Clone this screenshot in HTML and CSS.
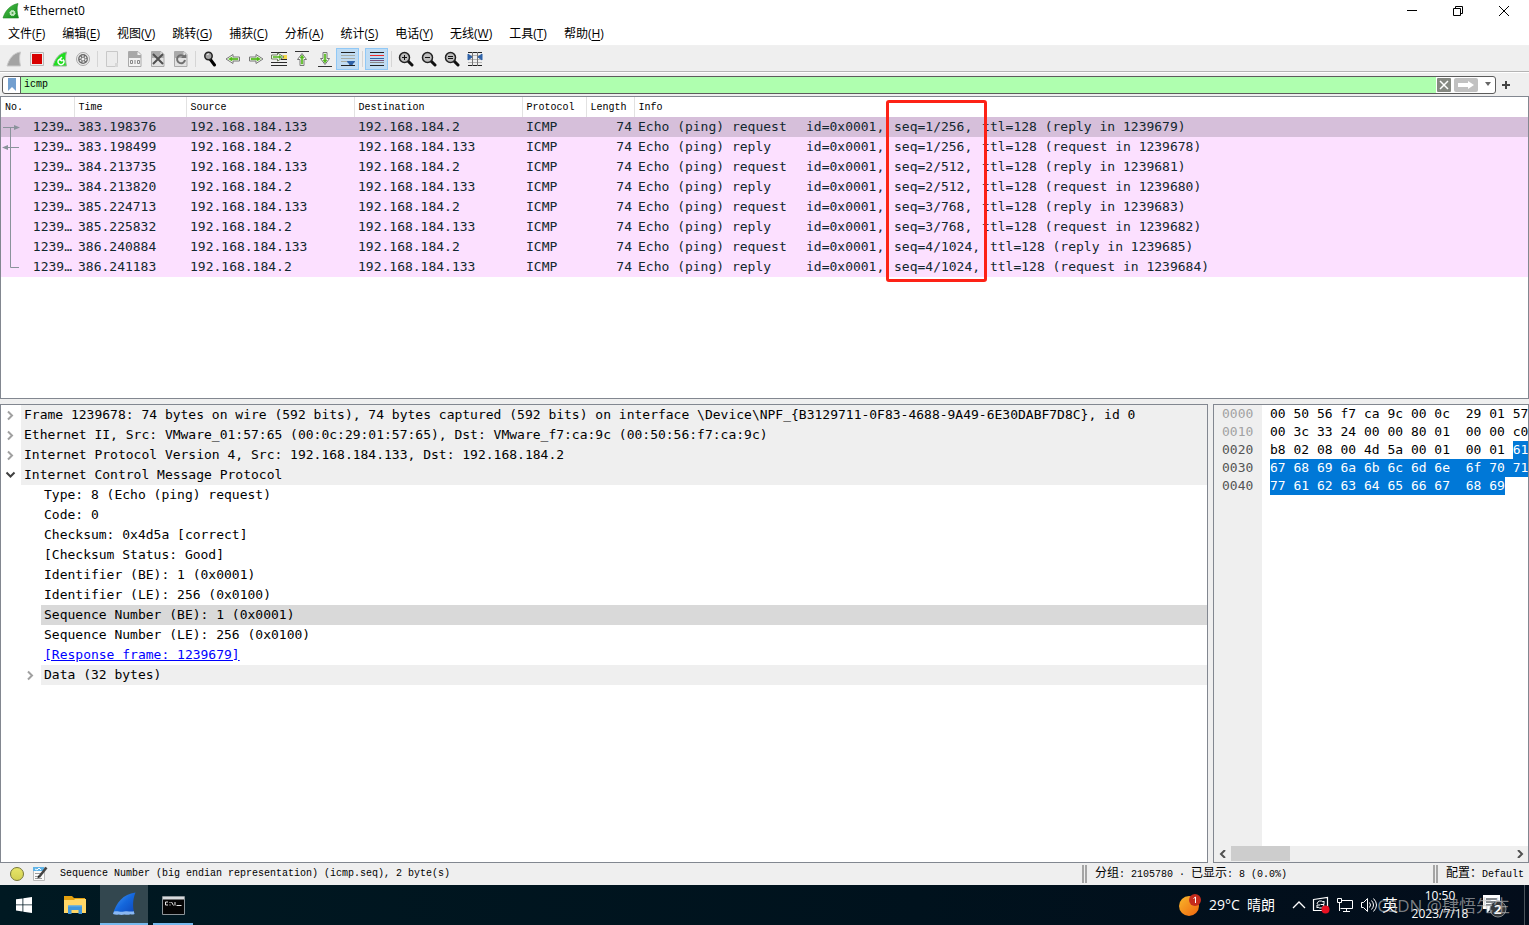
FILE: index.html
```html
<!DOCTYPE html>
<html lang="zh-CN">
<head>
<meta charset="utf-8">
<title>*Ethernet0</title>
<link rel="stylesheet" href="styles.css">
</head>
<body>
<svg width="0" height="0" class="defs" aria-hidden="true">
  <defs>
    <linearGradient id="finGreen" x1="0" y1="0" x2="1" y2="1"><stop offset="0" stop-color="#4fc24a"/><stop offset="1" stop-color="#138a1c"/></linearGradient>
    <linearGradient id="finBlue" x1="0" y1="0" x2="1" y2="1"><stop offset="0" stop-color="#4a9cf5"/><stop offset=".5" stop-color="#1467dc"/><stop offset="1" stop-color="#0d45b8"/></linearGradient>
    <linearGradient id="sun" x1="0" y1="0" x2="1" y2="1"><stop offset="0" stop-color="#f8b82c"/><stop offset="1" stop-color="#f0650e"/></linearGradient>
    <linearGradient id="led" x1="0" y1="0" x2="0" y2="1"><stop offset="0" stop-color="#e8e66a"/><stop offset="1" stop-color="#d2d052"/></linearGradient>
    <symbol id="lens" viewBox="0 0 16 16"><path d="M9 9l5 5" stroke="#111" stroke-width="3" stroke-linecap="round"/><circle cx="6.500" cy="6.500" r="5" fill="#bdbdbd" stroke="#222" stroke-width="1.500"/></symbol>
    <symbol id="arrow" viewBox="0 0 16 16"><path d="M1.500 6h6.500V3.500l7 4.500-7 4.500V10H1.500z" fill="#fff" stroke="#777"/><path d="M3 7.300h6V6l3.500 2L9 10V8.700H3z" fill="#54b81c" stroke="#54b81c" stroke-width=".6"/></symbol>
  </defs>
</svg>
<div class="window">
  <header class="titlebar">
    <svg class="app-icon" width="18" height="16" viewBox="0 0 18 16"><path d="M1 15C3 8 8 2 16 0.500 14.500 5 15 10 16.500 15z" fill="url(#finGreen)" stroke="#1c8a22" stroke-width=".6"/><circle cx="10.500" cy="10" r="2.600" fill="#bce8bb" stroke="#e4f7e3" stroke-dasharray="1.200 .8"/><circle cx="10.500" cy="10" r="1" fill="#4c9f4a"/></svg>
    <h1 class="title">*Ethernet0</h1>
    <div class="caption">
      <button aria-label="Minimize"><svg width="12" height="12" viewBox="0 0 12 12"><path d="M1 5.500h10" stroke="#000"/></svg></button>
      <button aria-label="Restore"><svg width="12" height="12" viewBox="0 0 12 12"><path d="M1.500 3.500h7v7h-7zM3.500 3.500v-2h7v7h-2" fill="none" stroke="#000"/></svg></button>
      <button aria-label="Close"><svg width="12" height="12" viewBox="0 0 12 12"><path d="M1 1l10 10M11 1L1 11" stroke="#000"/></svg></button>
    </div>
  </header>
  <nav class="menu">
    <button>文件(<u>F</u>)</button><button>编辑(<u>E</u>)</button><button>视图(<u>V</u>)</button><button>跳转(<u>G</u>)</button><button>捕获(<u>C</u>)</button><button>分析(<u>A</u>)</button><button>统计(<u>S</u>)</button><button>电话(<u>Y</u>)</button><button>无线(<u>W</u>)</button><button>工具(<u>T</u>)</button><button>帮助(<u>H</u>)</button>
  </nav>
  <div class="toolbar" role="toolbar">
    <button aria-label="Start capture"><svg width="16" height="16" viewBox="0 0 16 16"><path d="M1 15C3 8 7 2 14.500 1 13 6 13.500 10 14.500 15z" fill="#a3a3a3" stroke="#c9c9c9"/></svg></button>
    <button aria-label="Stop capture"><svg width="16" height="16" viewBox="0 0 16 16"><path d="M1.500 1.500h13v13h-13z" fill="#eee" stroke="#b9b9b9"/><path d="M3 3h10v10H3z" fill="#d80000"/></svg></button>
    <button aria-label="Restart capture"><svg width="16" height="16" viewBox="0 0 16 16"><path d="M1 15C3 8 7 2 14.500 1 13 6 13.500 10 14.500 15z" fill="#1fe01f" stroke="#9bb59b"/><path d="M7 8.500a3 3 0 1 0 4 0M10 6l-2.500 2.500L10.500 10" fill="none" stroke="#fff" stroke-width="1.500"/></svg></button>
    <button aria-label="Capture options"><svg width="16" height="16" viewBox="0 0 16 16"><circle cx="8" cy="8" r="6.500" fill="#eee" stroke="#a9a9a9"/><circle cx="8" cy="8" r="4.900" fill="#6a6a6a"/><circle cx="8" cy="8" r="3" fill="none" stroke="#eee" stroke-width="1.300" stroke-dasharray="2 1.140"/><circle cx="8" cy="8" r="1.600" fill="#eee"/></svg></button>
    <span class="sep"></span>
    <button aria-label="Open"><svg width="16" height="16" viewBox="0 0 16 16"><path d="M2.500.5h11v15h-11z" fill="#ececec" stroke="#c8c8c8"/><path d="M11 12h3v4h-3z" fill="#d7d7d7"/></svg></button>
    <button aria-label="Save"><svg width="16" height="16" viewBox="0 0 16 16"><path d="M1.500.5h9.500l3 3v12H1.500z" fill="#f2f2f2" stroke="#aaa"/><path d="M2 1h8.500v3H14v3H2z" fill="#a8a8a8"/><path d="M3.500 9.500h2v3h-2zM10.500 9.500h2v3h-2zM8 9v4" fill="none" stroke="#888"/></svg></button>
    <button aria-label="Close file"><svg width="16" height="16" viewBox="0 0 16 16"><path d="M1.500.5h9.500l3 3v12H1.500z" fill="#e2e2e2" stroke="#aaa"/><path d="M2 1h8.500v3H14v3H2z" fill="#aaa"/><path d="M3 3l10 10M13 3L3 13" stroke="#505050" stroke-width="2"/></svg></button>
    <button aria-label="Reload"><svg width="16" height="16" viewBox="0 0 16 16"><path d="M1.500.5h9.500l3 3v12H1.500z" fill="#e2e2e2" stroke="#aaa"/><path d="M2 1h8.500v3H14v3H2z" fill="#aaa"/><path d="M11 5.500A4 4 0 1 0 12 9" fill="none" stroke="#707070" stroke-width="2"/><path d="M8 7h5V3z" fill="#707070"/></svg></button>
    <span class="sep"></span>
    <button aria-label="Find"><svg width="16" height="16" viewBox="0 0 16 16"><path d="M8 8l4.500 6" stroke="#000" stroke-width="3" stroke-linecap="round"/><circle cx="6.500" cy="5" r="3.700" fill="#a5a5a5" stroke="#222" stroke-width="1.500"/><path d="M5 4a2 2 0 0 1 2-1" stroke="#eee" fill="none"/></svg></button>
    <button aria-label="Back"><svg width="16" height="16" class="left"><use href="#arrow"/></svg></button>
    <button aria-label="Forward"><svg width="16" height="16"><use href="#arrow"/></svg></button>
    <button aria-label="Go to packet"><svg width="16" height="16" viewBox="0 0 16 16"><path d="M0 1.500h16M0 11.500h16M0 14.500h16M10 8.500h6" stroke="#2b2b2b"/><path d="M12 4h4v4h-4z" fill="#f4d84a"/><path d="M.5 4h6V2l6.500 4-6.500 4V8h-6z" fill="#fff" stroke="#6c7c5c"/><path d="M2 5.500h6v-1L11 6 8 7.500v-1H2z" fill="#54b81c" stroke="#54b81c" stroke-width=".6"/></svg></button>
    <button aria-label="First packet"><svg width="16" height="16" viewBox="0 0 16 16"><path d="M1 .5h14" stroke="#333"/><path d="M6 14.500v-6H3.500L8 2.500l4.500 6H10v6z" fill="#fff" stroke="#777"/><path d="M7.300 13V7H6l2-3 2 3H8.700v6z" fill="#54b81c" stroke="#54b81c" stroke-width=".6"/></svg></button>
    <button aria-label="Last packet"><svg width="16" height="16" viewBox="0 0 16 16"><path d="M1 15.500h14" stroke="#333"/><path d="M6 1.500v6H3.500l4.500 6 4.500-6H10v-6z" fill="#fff" stroke="#777"/><path d="M7.300 3v6H6l2 3 2-3H8.700V3z" fill="#54b81c" stroke="#54b81c" stroke-width=".6"/></svg></button>
    <button class="on" aria-label="Auto scroll"><svg width="16" height="16" viewBox="0 0 16 16"><path d="M1 1.500h14M1 14.500h14" stroke="#222"/><path d="M1 4.500h14M1 7.500h14M1 10.500h14" stroke="#a8aca4"/><path d="M7 10h8c0 2-2 2-2.500 4h-3C9 12 7 12 7 10z" fill="#2f62a8"/></svg></button>
    <span class="sep"></span>
    <button class="on" aria-label="Colorize"><svg width="16" height="16" viewBox="0 0 16 16"><path d="M1 1.500h14M1 14.500h14" stroke="#222"/><path d="M1 4.500h14" stroke="#ef2929"/><path d="M1 7.500h14" stroke="#3465a4"/><path d="M1 9.500h14" stroke="#75507b"/><path d="M1 11.500h14" stroke="#888"/></svg></button>
    <span class="sep"></span>
    <button aria-label="Zoom in"><svg width="16" height="16" viewBox="0 0 16 16"><use href="#lens"/><path d="M4 6.500h5M6.500 4v5" stroke="#111"/></svg></button>
    <button aria-label="Zoom out"><svg width="16" height="16" viewBox="0 0 16 16"><use href="#lens"/><path d="M4 6.500h5" stroke="#111"/></svg></button>
    <button aria-label="Normal size"><svg width="16" height="16" viewBox="0 0 16 16"><use href="#lens"/><path d="M4 5.500h5M4 7.500h5" stroke="#111"/></svg></button>
    <button aria-label="Resize columns"><svg width="16" height="16" viewBox="0 0 16 16"><path d="M1 1.500h14M1 14.500h14" stroke="#222"/><path d="M1 4.500h14M1 8.500h14M1 11.500h14" stroke="#b5b5b5"/><path d="M5.500 1v14M10.500 1v14" stroke="#777"/><path d="M1 3l4 3-4 3zM15 3l-4 3 4 3z" fill="#2f62a8" stroke="#2f62a8"/></svg></button>
  </div>
  <form class="filter">
    <div class="filter-box">
      <button type="button" class="mark" aria-label="Bookmarks"><svg width="10" height="14" viewBox="0 0 10 14"><path d="M1 0h8v13l-4-4-4 4z" fill="#729fcf"/></svg></button>
      <input type="text" value="icmp" aria-label="Display filter" spellcheck="false">
      <button type="button" aria-label="Clear"><svg width="14" height="14" viewBox="0 0 14 14"><rect width="14" height="14" rx="1" fill="#858881"/><path d="M3 3l8 8M11 3l-8 8" stroke="#fff" stroke-width="1.500"/></svg></button>
      <button type="button" aria-label="Apply"><svg width="24" height="14" viewBox="0 0 24 14"><rect width="24" height="14" rx="2" fill="#c1c1c1"/><path d="M4 5h10V3l6 4-6 4V9H4z" fill="#fff"/></svg></button>
      <button type="button" class="drop" aria-label="History"><svg width="8" height="5" viewBox="0 0 8 5"><path d="M1 0h6L4 4z" fill="#666"/></svg></button>
    </div>
    <button type="button" class="plus" aria-label="Add filter"><svg width="10" height="10" viewBox="0 0 10 10"><path d="M1 5h8M5 1v8" stroke="#444" stroke-width="2"/></svg></button>
  </form>

  <section class="packets">
    <table>
      <colgroup><col class="c-no"><col class="c-time"><col class="c-addr"><col class="c-addr"><col class="c-proto"><col class="c-len"><col></colgroup>
      <thead><tr><th>No.</th><th>Time</th><th>Source</th><th>Destination</th><th>Protocol</th><th>Length</th><th>Info</th></tr></thead>
      <tbody>
        <tr class="current"><td>1239…</td><td>383.198376</td><td>192.168.184.133</td><td>192.168.184.2</td><td>ICMP</td><td>74</td><td><span class="kind">Echo (ping) request</span><span class="id">id=0x0001,</span><span class="seq">seq=1/256, </span>ttl=128 (reply in 1239679)</td></tr>
        <tr><td>1239…</td><td>383.198499</td><td>192.168.184.2</td><td>192.168.184.133</td><td>ICMP</td><td>74</td><td><span class="kind">Echo (ping) reply</span><span class="id">id=0x0001,</span><span class="seq">seq=1/256, </span>ttl=128 (request in 1239678)</td></tr>
        <tr><td>1239…</td><td>384.213735</td><td>192.168.184.133</td><td>192.168.184.2</td><td>ICMP</td><td>74</td><td><span class="kind">Echo (ping) request</span><span class="id">id=0x0001,</span><span class="seq">seq=2/512, </span>ttl=128 (reply in 1239681)</td></tr>
        <tr><td>1239…</td><td>384.213820</td><td>192.168.184.2</td><td>192.168.184.133</td><td>ICMP</td><td>74</td><td><span class="kind">Echo (ping) reply</span><span class="id">id=0x0001,</span><span class="seq">seq=2/512, </span>ttl=128 (request in 1239680)</td></tr>
        <tr><td>1239…</td><td>385.224713</td><td>192.168.184.133</td><td>192.168.184.2</td><td>ICMP</td><td>74</td><td><span class="kind">Echo (ping) request</span><span class="id">id=0x0001,</span><span class="seq">seq=3/768, </span>ttl=128 (reply in 1239683)</td></tr>
        <tr><td>1239…</td><td>385.225832</td><td>192.168.184.2</td><td>192.168.184.133</td><td>ICMP</td><td>74</td><td><span class="kind">Echo (ping) reply</span><span class="id">id=0x0001,</span><span class="seq">seq=3/768, </span>ttl=128 (request in 1239682)</td></tr>
        <tr><td>1239…</td><td>386.240884</td><td>192.168.184.133</td><td>192.168.184.2</td><td>ICMP</td><td>74</td><td><span class="kind">Echo (ping) request</span><span class="id">id=0x0001,</span><span class="seq">seq=4/1024, </span>ttl=128 (reply in 1239685)</td></tr>
        <tr><td>1239…</td><td>386.241183</td><td>192.168.184.2</td><td>192.168.184.133</td><td>ICMP</td><td>74</td><td><span class="kind">Echo (ping) reply</span><span class="id">id=0x0001,</span><span class="seq">seq=4/1024, </span>ttl=128 (request in 1239684)</td></tr>
      </tbody>
    </table>
    <svg class="related" width="22" height="160" viewBox="0 0 22 160"><path d="M2 10.500h12M6 30.500h12M9.500 10v140.500H18" fill="none" stroke="#8a939b"/><path d="M13 8l6 2.500-6 2.500zM7 28l-6 2.500L7 33z" fill="#8a939b"/></svg>
    <div class="highlight"></div>
  </section>

  <main class="lower">
    <section class="details">
      <ul>
        <li class="node"><svg width="20" height="20" viewBox="0 0 20 20"><path d="M7 6.500l4 4-4 4" class="shut"/></svg><span>Frame 1239678: 74 bytes on wire (592 bits), 74 bytes captured (592 bits) on interface \Device\NPF_{B3129711-0F83-4688-9A49-6E30DABF7D8C}, id 0</span></li>
        <li class="node"><svg width="20" height="20" viewBox="0 0 20 20"><path d="M7 6.500l4 4-4 4" class="shut"/></svg><span>Ethernet II, Src: VMware_01:57:65 (00:0c:29:01:57:65), Dst: VMware_f7:ca:9c (00:50:56:f7:ca:9c)</span></li>
        <li class="node"><svg width="20" height="20" viewBox="0 0 20 20"><path d="M7 6.500l4 4-4 4" class="shut"/></svg><span>Internet Protocol Version 4, Src: 192.168.184.133, Dst: 192.168.184.2</span></li>
        <li class="node"><svg width="20" height="20" viewBox="0 0 20 20"><path d="M5.500 7.500l4 4 4-4" class="open"/></svg><span>Internet Control Message Protocol</span></li>
        <li class="leaf"><span>Type: 8 (Echo (ping) request)</span></li>
        <li class="leaf"><span>Code: 0</span></li>
        <li class="leaf"><span>Checksum: 0x4d5a [correct]</span></li>
        <li class="leaf"><span>[Checksum Status: Good]</span></li>
        <li class="leaf"><span>Identifier (BE): 1 (0x0001)</span></li>
        <li class="leaf"><span>Identifier (LE): 256 (0x0100)</span></li>
        <li class="leaf selected"><span>Sequence Number (BE): 1 (0x0001)</span></li>
        <li class="leaf"><span>Sequence Number (LE): 256 (0x0100)</span></li>
        <li class="leaf"><span><a href="#">[Response frame: 1239679]</a></span></li>
        <li class="node child"><svg width="20" height="20" viewBox="0 0 20 20"><path d="M7 6.500l4 4-4 4" class="shut"/></svg><span>Data (32 bytes)</span></li>
      </ul>
    </section>
    <section class="bytes">
      <div class="dump">
        <pre class="offsets"><span>0000</span>
<span>0010</span>
0020
0030
0040</pre>
        <pre class="hex">00 50 56 f7 ca 9c 00 0c  29 01 57 65 08 00 45 00
00 3c 33 24 00 00 80 01  00 00 c0 a8 b8 85 c0 a8
b8 02 08 00 4d 5a 00 01  00 01 <mark>61 62 63 64 65 66</mark>
<mark>67 68 69 6a 6b 6c 6d 6e  6f 70 71 72 73 74 75 76</mark>
<mark>77 61 62 63 64 65 66 67  68 69</mark></pre>
      </div>
      <div class="hscroll">
        <button aria-label="Scroll left"><svg width="8" height="8" viewBox="0 0 8 8"><path d="M6 0L2 4l4 4" fill="none" stroke="#505050" stroke-width="2"/></svg></button>
        <div class="track"><div class="thumb"></div></div>
        <button aria-label="Scroll right"><svg width="8" height="8" viewBox="0 0 8 8"><path d="M2 0l4 4-4 4" fill="none" stroke="#505050" stroke-width="2"/></svg></button>
      </div>
    </section>
  </main>

  <footer class="status">
    <button aria-label="Expert info"><svg width="16" height="16" viewBox="0 0 16 16"><circle cx="8" cy="8" r="6.500" fill="url(#led)" stroke="#77773a"/></svg></button>
    <button aria-label="Capture comments"><svg width="16" height="16" viewBox="0 0 16 16"><path d="M1.500 1.500h11v13h-11z" fill="#fafafa" stroke="#bbb"/><path d="M1 1h11v4H1z" fill="#60b4e8"/><path d="M3 3l2 1 2-2 2 2" stroke="#fff" fill="none"/><path d="M3 7.500h6M3 10.500h3M3 12.500h7" stroke="#9a9a9a"/><path d="M14.500 1.500L7 11" stroke="#444" stroke-width="2.500"/><path d="M5.500 12.500l.5-3 2 1.500z" fill="#222"/></svg></button>
    <span class="message">Sequence Number (big endian representation) (icmp.seq), 2 byte(s)</span>
    <span class="counts"><span class="cn">分组</span>: 2105780 · <span class="cn">已显示</span>: 8 (0.0%)</span>
    <span class="profile"><span class="cn">配置：</span>Default</span>
  </footer>

  <div class="taskbar">
    <button class="task" aria-label="Start"><svg width="16" height="16" viewBox="0 0 16 16"><path d="M0 2.300l6.500-.9v6.100H0zM7.300 1.300L16 0v7.500H7.300zM0 8.300h6.500v6.200L0 13.600zM7.300 8.300H16V16l-8.700-1.300z" fill="#fff"/></svg></button>
    <button class="task" aria-label="File Explorer"><svg width="22" height="20" viewBox="0 0 22 20"><path d="M0 1h8l2 2h11v4H0z" fill="#e4a10f"/><path d="M0 5h10l1-1h11v14H0z" fill="#ffd767"/><path d="M4 10.500h14V19h-3.500v-4h-7v4H4z" fill="#3f96dc"/><path d="M4 10.500h14v1H4z" fill="#65b5ee"/></svg></button>
    <button class="task active" aria-label="Wireshark"><svg width="24" height="24" viewBox="0 0 24 24"><path d="M1 22C4 11 11 2 23.500 0.500 20.500 8 20.500 15 22.500 22z" fill="url(#finBlue)"/><path d="M1 22l1-2.500c4-1 6 1 10 0s6 .5 9.800-.3l.7 2.800q-2 1-4 .3-3 1-6 .2-3 .8-6 0-3 .6-5.500-.500z" fill="#8ab8f2"/></svg></button>
    <button class="task running" aria-label="Command Prompt"><svg width="23" height="19" viewBox="0 0 23 19"><path d="M.5.5h22v18H.5z" fill="#050505" stroke="#8c9499"/><path d="M1 1h21v2.500H1z" fill="#d6dade"/><path d="M6 6H3.500v3H6M8 6v1M8 8.500v1M9.500 6l2 3.500M13 6v3.500M14.500 9.500h5" fill="none" stroke="#e8e8e8"/></svg></button>
    <div class="tray">
      <button class="weather"><svg width="24" height="24" viewBox="0 0 24 24"><circle cx="11" cy="13" r="10" fill="url(#sun)"/><circle cx="17" cy="7" r="6" fill="#c42b1c"/><path d="M15.500 5.500l2-1.500v6" fill="none" stroke="#fff"/></svg><span>29°C&nbsp; 晴朗</span></button>
      <button class="chev" aria-label="Hidden icons"><svg width="14" height="10" viewBox="0 0 14 10"><path d="M1 8l6-6 6 6" fill="none" stroke="#fff" stroke-width="1.300"/></svg></button>
      <button aria-label="Sync"><svg width="18" height="18" viewBox="0 0 18 18"><path d="M1.500 3.500l14-2v13h-14z" fill="none" stroke="#fff" stroke-width="1.200"/><path d="M5 8a3.500 3.500 0 0 1 6-2l1-1v3.500H8.500M12 9a3.500 3.500 0 0 1-6 2l-1 1V9h3" fill="none" stroke="#fff"/><circle cx="13.500" cy="13.500" r="4" fill="#e81123"/></svg></button>
      <button aria-label="Network"><svg width="18" height="16" viewBox="0 0 18 16"><path d="M5.500 3.500h11v8H4.500M10.500 12v2.500M7 14.500h7M1.500 1.500h4v4h-4zM3.500 6v8" fill="none" stroke="#fff"/></svg></button>
      <button aria-label="Volume"><svg width="18" height="16" viewBox="0 0 18 16"><path d="M1.500 5.500h2l4-4v13l-4-4h-2zM9.500 5.500q2 2.500 0 5M11.500 3.500q4 4.500 0 9M13.500 1.500q6 6.500 0 13" fill="none" stroke="#fff"/></svg></button>
      <button class="ime">英</button>
      <button class="clock"><span>10:50</span><span>2023/7/18</span></button>
      <button class="notes" aria-label="Notifications"><svg width="26" height="26" viewBox="0 0 26 26"><path d="M1 3h17v14H9l-4 4v-4H1z" fill="#fff"/><path d="M4 7h11M4 10h11M4 13h6" stroke="#061018"/><circle cx="16" cy="17" r="8" fill="#34383b" stroke="#85898c"/></svg><b>2</b></button>
      <div class="watermark">CSDN @肆悟先生</div>
    </div>
  </div>
</div>
</body>
</html>
```

FILE: styles.css
```css
* { box-sizing: border-box; }

body {
  margin: 0;
  background: #efefef;
  color: #000;
  font: 12px/16px "Open Sans", "Noto Sans CJK SC", sans-serif;
}

button {
  display: flex;
  align-items: center;
  justify-content: center;
  margin: 0;
  padding: 0;
  border: 0;
  background: none;
  color: inherit;
  font: inherit;
}

svg { display: block; flex: none; }
.defs { position: absolute; }
.left { transform: rotate(180deg); }

.window {
  display: flex;
  flex-direction: column;
  height: 100vh;
  overflow: hidden;
}

.titlebar {
  display: flex;
  align-items: center;
  gap: 3px;
  height: 22px;
  padding-left: 2px;
  background: #fff;
}
.title { flex: 1; margin: 0; font-size: 12px; font-weight: 400; }
.caption { display: flex; }
.caption button { width: 46px; height: 20px; }
.caption button:last-child { margin-right: 2px; }

.menu {
  display: flex;
  gap: 17px;
  height: 24px;
  padding: 2px 8px 0;
  background: #fff;
  border-bottom: 1px solid #f0f0f0;
}
.menu button { height: 20px; }
.menu u { text-underline-offset: 2px; }

.toolbar {
  display: flex;
  align-items: center;
  height: 26px;
  padding-left: 2px;
  border-bottom: 1px solid #b4b4b4;
}
.toolbar button { width: 23px; height: 22px; }
.toolbar .on { background: #c0dcf3; border: 1px solid #90c8f6; }
.sep { width: 1px; height: 16px; margin: 0 2px 0 3px; background: #d5d5d5; }

.filter {
  display: flex;
  align-items: center;
  gap: 5px;
  height: 24px;
  padding: 0 18px 0 2px;
  border-top: 1px solid #fff;
}
.filter-box {
  display: flex;
  flex: 1;
  align-items: center;
  gap: 3px;
  height: 18px;
  overflow: hidden;
  border: 1px solid #5c5c5c;
  border-radius: 3px;
  background: #fff;
}
.filter-box .mark { width: 18px; height: 16px; margin-right: -3px; border-right: 1px solid #5c5c5c; }
.filter-box input {
  flex: 1;
  min-width: 0;
  height: 16px;
  margin-right: -2px;
  padding: 0 3px;
  border: 0;
  outline: 0;
  background: #afffaf;
  font: 10px/16px "Liberation Mono", monospace;
}
.filter-box .drop { width: 14px; }
.filter .plus { width: 10px; }

.packets {
  position: relative;
  flex: 302 1 0;
  min-height: 0;
  overflow: hidden;
  border: 1px solid #828790;
  background: #fff;
}
.packets table { width: 100%; table-layout: fixed; border-collapse: collapse; }
.c-no { width: 73px; }
.c-time { width: 112px; }
.c-addr { width: 168px; }
.c-proto { width: 64px; }
.c-len { width: 48px; }
.packets th {
  height: 20px;
  padding: 0 4px;
  border-right: 1px solid #e2e2e2;
  font: 10px/19px "Liberation Mono", monospace;
  text-align: left;
}
.packets th:last-child { border-right: 0; }
.packets td {
  height: 20px;
  padding: 0 0 0 4px;
  overflow: hidden;
  background: #fce0ff;
  color: #12272e;
  font: 13px/20px "DejaVu Sans Mono", monospace;
  white-space: pre;
}
.packets td:first-child, .packets td:nth-child(6) { padding-right: 2px; text-align: right; }
.packets .current td { background: #d6bfda; }
.kind, .id { display: inline-block; }
.kind { width: 168px; }
.id { width: 88px; }
.seq { margin-right: 2px; }
.related { position: absolute; left: 0; top: 20px; }
.highlight {
  position: absolute;
  left: 885px;
  top: 3px;
  width: 101px;
  height: 182px;
  border: 3px solid #fd2216;
  border-radius: 3px;
}

.lower {
  display: grid;
  flex: 460 1 0;
  grid-template-columns: minmax(0, 1fr) 316px;
  gap: 5px;
  min-height: 0;
  margin-top: 5px;
}
.details, .bytes { overflow: hidden; border: 1px solid #828790; background: #fff; }
.details ul {
  margin: 0;
  padding: 0;
  list-style: none;
  font: 13px/20px "DejaVu Sans Mono", monospace;
}
.details li { display: flex; }
.details span { flex: 1; min-width: 0; padding-left: 3px; white-space: pre; }
.node span { background: #efefef; }
.leaf { padding-left: 40px; }
.child { padding-left: 20px; }
.selected span { background: #d9d9d9; }
.details a { color: #00f; }
.shut, .open { fill: none; stroke: #a0a0a0; stroke-width: 2; }
.open { stroke: #404040; }

.bytes { display: flex; flex-direction: column; }
.dump {
  display: flex;
  flex: 1;
  min-height: 0;
  overflow: hidden;
  font: 13px/18px "DejaVu Sans Mono", monospace;
}
.dump pre { margin: 0; padding: 0 8px; font: inherit; }
.offsets { width: 48px; flex: none; background: #efefef; color: #555; }
.offsets span { color: #a2a2a2; }
.hex mark { display: inline-block; background: #0078d7; color: #fff; }
.hscroll { display: flex; height: 16px; background: #efefef; }
.hscroll button { width: 17px; }
.track { flex: 1; }
.thumb { width: 21%; height: 15px; background: #cdcdcd; }

.status {
  display: flex;
  align-items: center;
  height: 22px;
  padding-left: 9px;
  font: 10px/18px "Liberation Mono", "Noto Sans CJK SC", monospace;
}
.status button { margin-right: 7px; }
.message { flex: 1; padding-left: 5px; }
.counts, .profile {
  height: 18px;
  padding-left: 8px;
  border-left: 5px double #a5a5a5;
  white-space: pre;
}
.cn { font-size: 12px; }
.counts { width: 351px; }
.profile { width: 96px; }

.taskbar {
  display: flex;
  height: 40px;
  background: linear-gradient(90deg, #001922, #00121d 60%, #030d1b);
  color: #fff;
}
.task { width: 48px; margin-right: 1px; }
.task:first-child { margin-right: 3px; }
.active { background: #33474f; border-bottom: 2px solid #76b9ed; }
.running { background: linear-gradient(#76b9ed, #76b9ed) bottom / 40px 2px no-repeat; }
.tray { position: relative; display: flex; gap: 6px; margin-left: auto; }
.weather { gap: 7px; margin-right: 11px; font-size: 14px; }
.ime { margin-left: -2px; font-size: 16px; }
.clock { flex-direction: column; width: 72px; font-size: 12px; line-height: 18px; }
.notes {
  position: relative;
  justify-content: flex-start;
  width: 43px;
  margin-right: 4px;
  border-right: 1px solid #4a545c;
}
.notes b { position: absolute; left: 12px; top: 16px; font-size: 13px; }
.watermark {
  position: absolute;
  right: 19px;
  top: 9px;
  color: rgba(190, 190, 190, 0.65);
  font: 17px/24px "Open Sans", "Noto Sans CJK SC", sans-serif;
  white-space: nowrap;
  pointer-events: none;
}
```
